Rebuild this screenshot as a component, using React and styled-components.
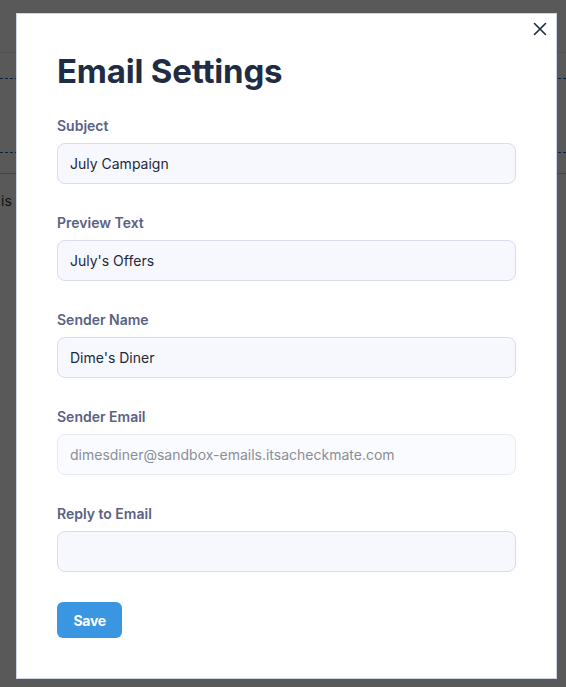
import styled, { createGlobalStyle } from 'styled-components';

const GlobalStyle = createGlobalStyle`
  html, body {
    margin: 0;
    padding: 0;
    background: #ffffff;
    font-family: Inter, "Noto Sans", "Liberation Sans", sans-serif;
    overflow: hidden;
  }
  * {
    box-sizing: border-box;
  }
`;

const Page = styled.div`
  width: 566px;
  height: 687px;
  background: #ffffff;
`;

const PageHeader = styled.header`
  height: 53px;
  border-bottom: 1px solid #e2e4ea;
`;

const DropZone = styled.div`
  margin-top: 25px;
  height: 75px;
  border-top: 1px dashed #1f5fa8;
  border-bottom: 1px dashed #1f5fa8;
`;

const Divider = styled.hr`
  margin: 20px 0 0;
  border: none;
  border-top: 1px solid #c4c7cf;
`;

const BodyText = styled.p`
  margin: 18px 0 0 1px;
  font-size: 14px;
  color: #333;
  white-space: nowrap;
`;

const Overlay = styled.div`
  position: fixed;
  inset: 0;
  background: rgba(0, 0, 0, 0.65);
  display: flex;
  align-items: flex-start;
  padding: 13px 0 0 16px;
`;

const Modal = styled.div`
  position: relative;
  width: 541px;
  background: #ffffff;
  border: 1px solid #cdd3e6;
  padding: 37px 40px 40px;
`;

const CloseButton = styled.button`
  position: absolute;
  top: 1px;
  right: 2px;
  width: 28px;
  height: 28px;
  border: none;
  background: transparent;
  padding: 0;
  display: flex;
  align-items: center;
  justify-content: center;
  cursor: pointer;
  color: #1f2a3d;
`;

const Title = styled.h1`
  margin: 0 0 25px;
  font-size: 33px;
  line-height: 40px;
  font-weight: 700;
  color: #1f2c44;
  letter-spacing: -0.2px;
`;

const Form = styled.form`
  display: flex;
  flex-direction: column;
  gap: 29px;
`;

const Field = styled.div`
  display: flex;
  flex-direction: column;
  gap: 7px;
`;

const Label = styled.label`
  font-size: 14px;
  line-height: 20px;
  font-weight: 600;
  color: #5a6283;
`;

const Input = styled.input`
  height: 41px;
  width: 100%;
  border-radius: 8px;
  border: 1px solid ${(p) => (p.disabled ? '#e8eaf3' : '#d7dcef')};
  background: ${(p) => (p.disabled ? '#fafbfe' : '#f7f8fe')};
  padding: 0 12px;
  font-family: inherit;
  font-size: 14px;
  color: #1e293b;
  outline: none;

  &:disabled {
    color: #8a8e98;
  }
`;

const SaveButton = styled.button`
  align-self: flex-start;
  margin-top: 1px;
  height: 36px;
  padding: 0 16.5px;
  border: none;
  border-radius: 6px;
  background: #3a96e0;
  color: #ffffff;
  font-family: inherit;
  font-size: 14px;
  font-weight: 700;
  letter-spacing: -0.3px;
  cursor: pointer;
`;

const fields = [
  { label: 'Subject', value: 'July Campaign' },
  { label: 'Preview Text', value: "July's Offers" },
  { label: 'Sender Name', value: "Dime's Diner" },
  { label: 'Sender Email', value: 'dimesdiner@sandbox-emails.itsacheckmate.com', disabled: true },
  { label: 'Reply to Email', value: '' },
];

const App = () => {
  return (
    <>
      <GlobalStyle />
      <Page>
        <PageHeader />
        <DropZone />
        <Divider />
        <BodyText>is email content</BodyText>
      </Page>
      <Overlay>
        <Modal>
          <CloseButton aria-label="Close">
            <svg width="14" height="14" viewBox="0 0 14 14" fill="none">
              <path d="M1.5 1.5L12.5 12.5M12.5 1.5L1.5 12.5" stroke="currentColor" strokeWidth="1.6" strokeLinecap="round" />
            </svg>
          </CloseButton>
          <Title>Email Settings</Title>
          <Form onSubmit={(e) => e.preventDefault()}>
            {fields.map((field) => (
              <Field key={field.label}>
                <Label>{field.label}</Label>
                <Input defaultValue={field.value} disabled={field.disabled} />
              </Field>
            ))}
            <SaveButton type="submit">Save</SaveButton>
          </Form>
        </Modal>
      </Overlay>
    </>
  );
};

export default App;
